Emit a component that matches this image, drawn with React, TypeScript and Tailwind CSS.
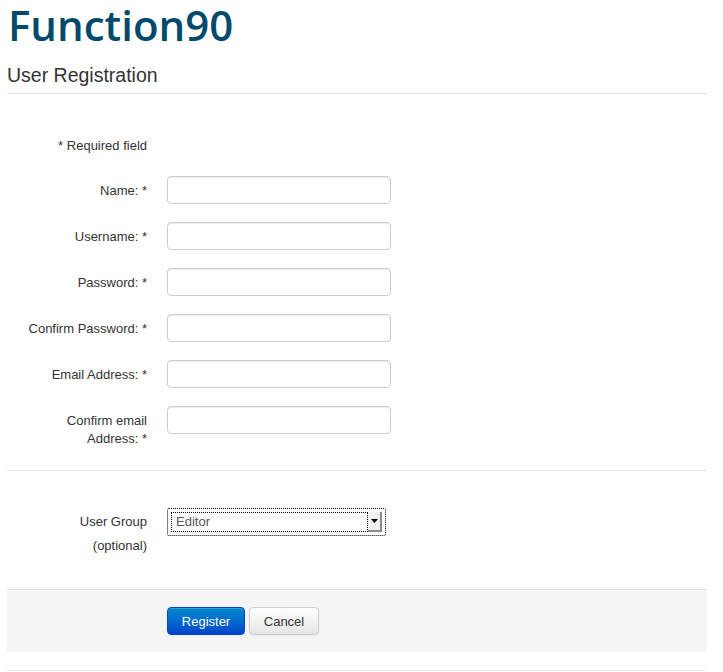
const fields = [
  { label: "Name: *", type: "text" },
  { label: "Username: *", type: "text" },
  { label: "Password: *", type: "password" },
  { label: "Confirm Password: *", type: "password" },
  { label: "Email Address: *", type: "text" },
];

const Row = ({ label, children }: { label: React.ReactNode; children: React.ReactNode }) => (
  <div className="flex items-start mb-[18px]">
    <label className="w-[140px] shrink-0 text-right pt-[6px] leading-[18px] text-[13px] text-[#333]">{label}</label>
    <div className="ml-[20px]">{children}</div>
  </div>
);

const TextInput = ({ type }: { type: string }) => (
  <input
    type={type}
    className="block w-[224px] h-[28px] rounded-[4px] border border-[#cccccc] bg-white px-[6px] text-[13px] shadow-[inset_0_1px_1px_rgba(0,0,0,0.075)] outline-none"
  />
);

export default function App() {
  return (
    <main className="min-h-screen w-full bg-white pl-[7px] pr-[16px] font-['Liberation_Sans',Arial,sans-serif] text-[#333]">
      <h1 className="font-['Open_Sans',sans-serif] font-semibold text-[42px] leading-[50px] text-[#024a6c] pl-[1px]">
        Function90
      </h1>
      <h2 className="mt-[13px] pb-[6px] border-b border-[#e5e5e5] text-[19.5px] leading-[24px] text-[#333]">
        User Registration
      </h2>

      <form className="pt-[43px]">
        <div className="flex mb-[21px]">
          <span className="w-[140px] text-right text-[13px] leading-[18px]">* Required field</span>
        </div>

        {fields.map((f) => (
          <Row key={f.label} label={f.label}>
            <TextInput type={f.type} />
          </Row>
        ))}
        <Row
          label={
            <>
              Confirm email
              <br />
              Address: *
            </>
          }
        >
          <TextInput type="text" />
        </Row>

        <div className="border-t border-[#e5e5e5] mt-[22px] pt-[37px] pb-[31px]">
          <div className="flex items-start">
            <div className="w-[140px] shrink-0 text-right text-[13px] leading-[24px] pt-[2px]">
              User Group
              <br />
              (optional)
            </div>
            <div className="ml-[20px] w-[219px] h-[28px] border border-dotted border-black rounded-[2px] p-[3px] flex items-stretch bg-white">
              <div className="flex-1 border border-dotted border-black flex items-center pl-[4px] text-[13px] text-[#555]">
                Editor
              </div>
              <div className="w-[14px] bg-[#f0f0f0] border-r-2 border-b-2 border-[#8a8a8a] flex items-center justify-center">
                <svg width="7" height="4" viewBox="0 0 7 4">
                  <path d="M0 0h7L3.5 4z" fill="#000" />
                </svg>
              </div>
            </div>
          </div>
        </div>

        <div className="bg-[#f5f5f5] border-t border-[#e5e5e5] pt-[17px] pb-[17px] pl-[160px] flex gap-[4px]">
          <button
            type="button"
            className="h-[28px] w-[78px] pt-[1px] rounded-[4px] border border-[#0044cc] bg-gradient-to-b from-[#0088cc] to-[#0044cc] text-white text-[13px] shadow-[inset_0_1px_0_rgba(255,255,255,0.2)]"
          >
            Register
          </button>
          <button
            type="button"
            className="h-[28px] w-[70px] pt-[1px] rounded-[4px] border border-[#cccccc] bg-gradient-to-b from-white to-[#e6e6e6] text-[#333] text-[13px] shadow-[0_1px_2px_rgba(0,0,0,0.05)]"
          >
            Cancel
          </button>
        </div>
      </form>
      <div className="mt-[18px] border-t border-[#e5e5e5] mr-[2px]" />
    </main>
  );
}
